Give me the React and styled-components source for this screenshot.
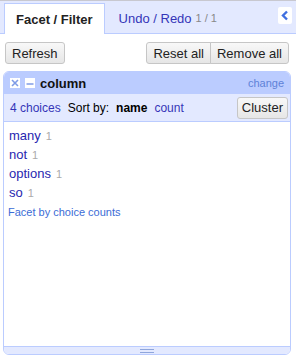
import React from "react";
import styled, { createGlobalStyle } from "styled-components";

const Global = createGlobalStyle`
  html, body { margin: 0; padding: 0; background: #fff; }
  body { font-family: "Liberation Sans", Arial, sans-serif; font-size: 13px; color: #000; }
  * { box-sizing: border-box; }
`;

const Page = styled.div`
  width: 296px;
  height: 359px;
  display: flex;
  flex-direction: column;
`;

const TabBar = styled.div`
  position: relative;
  height: 34px;
  background: #e3e9ff;
  border-top: 1px solid #c8c8d0;
  border-bottom: 1px solid #bcf;
  display: flex;
  align-items: flex-end;
  padding-left: 4px;
`;

const Tab = styled.div`
  height: ${(p) => (p.$active ? "31px" : "30px")};
  margin-bottom: ${(p) => (p.$active ? "-1px" : "0")};
  padding: 0 ${(p) => (p.$active ? "11px" : "14px")};
  display: flex;
  align-items: center;
  font-size: 13px;
  font-weight: ${(p) => (p.$active ? "bold" : "normal")};
  color: ${(p) => (p.$active ? "#222" : "#3535b8")};
  background: ${(p) => (p.$active ? "#fff" : "transparent")};
  border: ${(p) => (p.$active ? "1px solid #bcf" : "none")};
  border-bottom: none;
`;

const Count = styled.span`
  color: #888;
  font-size: 11px;
  margin-left: 4px;
  font-weight: normal;
`;

const Collapse = styled.div`
  position: absolute;
  right: 4px;
  top: 6px;
  width: 14px;
  height: 17px;
  background: #fff;
  border-radius: 2px;
  display: flex;
  align-items: center;
  justify-content: center;
`;

const Toolbar = styled.div`
  display: flex;
  justify-content: space-between;
  padding: 8px 7px 0 5px;
`;

const Group = styled.div`
  display: flex;
`;

const Button = styled.button`
  font-family: "Liberation Sans", Arial, sans-serif;
  font-size: 13px;
  color: #222;
  height: 22px;
  padding: 0 ${(p) => p.$pad || "6px"};
  background: linear-gradient(#f8f8f8, #e6e6e6);
  border: 1px solid #c6c6c6;
  border-radius: ${(p) => p.$radius || "3px"};
  margin: 0;
  margin-left: ${(p) => (p.$joined ? "-1px" : "0")};
  cursor: pointer;
`;

const Panel = styled.div`
  margin: 7px 5px 4px 3px;
  flex: 1;
  border: 1px solid #bcf;
  border-radius: 6px;
  display: flex;
  flex-direction: column;
  overflow: hidden;
`;

const Header = styled.div`
  background: #bcf;
  height: 22px;
  display: flex;
  align-items: center;
  padding: 0 6px;
  gap: 5px;
`;

const IconBox = styled.span`
  width: 10px;
  height: 10px;
  background: #fff;
  display: inline-flex;
  align-items: center;
  justify-content: center;
`;

const Title = styled.span`
  font-weight: bold;
  font-size: 13px;
  flex: 1;
  color: #111;
`;

const Change = styled.a`
  font-size: 11px;
  color: #5e82d8;
  text-decoration: none;
`;

const Controls = styled.div`
  background: #e3e9ff;
  height: 28px;
  border-bottom: 1px solid #bcf;
  display: flex;
  align-items: center;
  padding: 0 2px 0 6px;
  font-size: 12px;
`;

const Link = styled.a`
  color: #3535b8;
  text-decoration: none;
  margin-right: ${(p) => p.$mr || "0"};
`;

const Label = styled.span`
  margin-right: 7px;
  font-weight: ${(p) => (p.$bold ? "bold" : "normal")};
`;

const Spacer = styled.span`
  flex: 1;
`;

const Body = styled.div`
  flex: 1;
  padding: 4px 4px 0 4px;
`;

const Choice = styled.div`
  height: 19px;
  display: flex;
  align-items: center;
  font-size: 13px;
  padding-left: 1px;
`;

const ChoiceName = styled.a`
  color: #2727b0;
  text-decoration: none;
`;

const ChoiceCount = styled.span`
  color: #aaa;
  font-size: 11px;
  margin-left: 5px;
`;

const FooterLink = styled.a`
  display: block;
  margin-top: 4px;
  font-size: 11px;
  color: #3b6cd6;
  text-decoration: none;
`;

const Grip = styled.div`
  height: 8px;
  background: #e3e9ff;
  border-top: 1px solid #bcf;
  display: flex;
  align-items: center;
  justify-content: center;
`;

export default function App() {
  const choices = ["many", "not", "options", "so"];
  return (
    <>
      <Global />
      <Page>
        <TabBar>
          <Tab $active>Facet / Filter</Tab>
          <Tab>
            Undo / Redo<Count>1 / 1</Count>
          </Tab>
          <Collapse>
            <svg width="8" height="11" viewBox="0 0 8 11">
              <path d="M6 1.5 L2 5.5 L6 9.5" stroke="#3f6fe0" strokeWidth="2.4" fill="none" />
            </svg>
          </Collapse>
        </TabBar>
        <Toolbar>
          <Button>Refresh</Button>
          <Group>
            <Button $radius="3px 0 0 3px">Reset all</Button>
            <Button $joined $radius="0 3px 3px 0">Remove all</Button>
          </Group>
        </Toolbar>
        <Panel>
          <Header>
            <IconBox>
              <svg width="8" height="8" viewBox="0 0 8 8">
                <path d="M1 1 L7 7 M7 1 L1 7" stroke="#7f9be6" strokeWidth="1.6" />
              </svg>
            </IconBox>
            <IconBox>
              <svg width="8" height="8" viewBox="0 0 8 8">
                <path d="M0.5 5 L7.5 5" stroke="#7f9be6" strokeWidth="1.6" />
              </svg>
            </IconBox>
            <Title>column</Title>
            <Change href="#">change</Change>
          </Header>
          <Controls>
            <Link href="#" $mr="7px">4 choices</Link>
            <Label>Sort by:</Label>
            <Label $bold>name</Label>
            <Link href="#">count</Link>
            <Spacer />
            <Button $pad="4px">Cluster</Button>
          </Controls>
          <Body>
            {choices.map((c) => (
              <Choice key={c}>
                <ChoiceName href="#">{c}</ChoiceName>
                <ChoiceCount>1</ChoiceCount>
              </Choice>
            ))}
            <FooterLink href="#">Facet by choice counts</FooterLink>
          </Body>
          <Grip>
            <svg width="14" height="4" viewBox="0 0 14 4">
              <path d="M0 0.5 H14 M0 3.5 H14" stroke="#8fa6dc" strokeWidth="1" />
            </svg>
          </Grip>
        </Panel>
      </Page>
    </>
  );
}
